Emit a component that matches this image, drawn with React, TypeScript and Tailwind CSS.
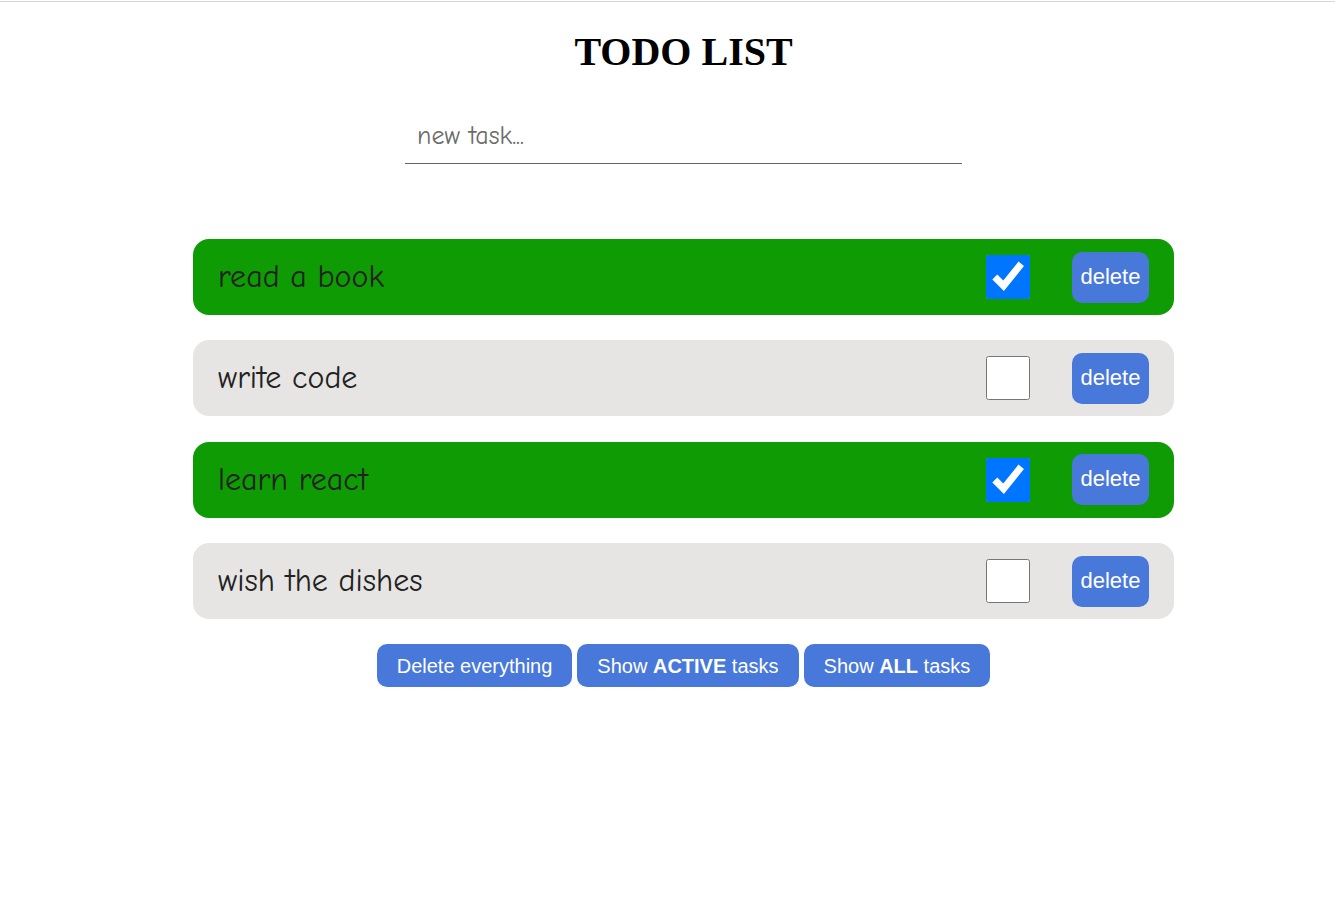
import { useState } from 'react';

type Task = { id: number; text: string; done: boolean };

const initialTasks: Task[] = [
  { id: 1, text: 'read a book', done: true },
  { id: 2, text: 'write code', done: false },
  { id: 3, text: 'learn react', done: true },
  { id: 4, text: 'wish the dishes', done: false },
];

const comic = { fontFamily: '"Comic Sans MS", "Comic Neue", "DejaVu Sans", sans-serif' };

const App = () => {
  const [tasks, setTasks] = useState<Task[]>(initialTasks);
  const [text, setText] = useState('');

  const toggle = (id: number) =>
    setTasks(tasks.map((t) => (t.id === id ? { ...t, done: !t.done } : t)));

  const remove = (id: number) => setTasks(tasks.filter((t) => t.id !== id));

  return (
    <div className="min-h-screen bg-white pt-px">
      <div className="border-t border-[#d6d6d6]" />
      <div className="flex flex-col items-center pl-8">
        {/* Title */}
        <h1 className="mt-[27px] text-[40px] font-bold leading-[46px] text-black font-['Liberation_Serif',serif]">
          TODO LIST
        </h1>

        {/* New task input */}
        <input
          value={text}
          onChange={(e) => setText(e.target.value)}
          placeholder="new task..."
          style={comic}
          className="mt-[33px] w-[557px] h-[56px] border-b border-[#666] px-3 text-[26px] text-[#333] placeholder:text-[#6b6b6b] outline-none"
        />

        {/* Tasks */}
        <div className="mt-[75px] flex w-[981px] flex-col gap-[25.4px]">
          {tasks.map((task) => (
            <div
              key={task.id}
              className={`flex h-[76px] items-center rounded-2xl pl-[25px] pr-[25px] ${
                task.done ? 'bg-[#0e9b04]' : 'bg-[#e6e5e3]'
              }`}
            >
              <span style={comic} className="flex-1 text-[32px] text-[#222]">
                {task.text}
              </span>
              <input
                type="checkbox"
                checked={task.done}
                onChange={() => toggle(task.id)}
                className="m-0 h-[44px] w-[44px] accent-[#0075ff]"
              />
              <button
                onClick={() => remove(task.id)}
                className="ml-[42px] h-[51px] w-[77px] rounded-[10px] bg-[#4878d9] pb-[2px] text-[22px] text-white font-['Liberation_Sans',Arial,sans-serif]"
              >
                delete
              </button>
            </div>
          ))}
        </div>

        {/* Footer buttons */}
        <div className="mt-[25px] flex gap-[5px] font-['Liberation_Sans',Arial,sans-serif] text-[20px] text-white">
          <button onClick={() => setTasks([])} className="h-[43px] rounded-[10px] bg-[#4878d9] px-5">
            Delete everything
          </button>
          <button className="h-[43px] rounded-[10px] bg-[#4878d9] px-5">
            Show <b>ACTIVE</b> tasks
          </button>
          <button className="h-[43px] rounded-[10px] bg-[#4878d9] px-5">
            Show <b>ALL</b> tasks
          </button>
        </div>
      </div>
    </div>
  );
};

export default App;
